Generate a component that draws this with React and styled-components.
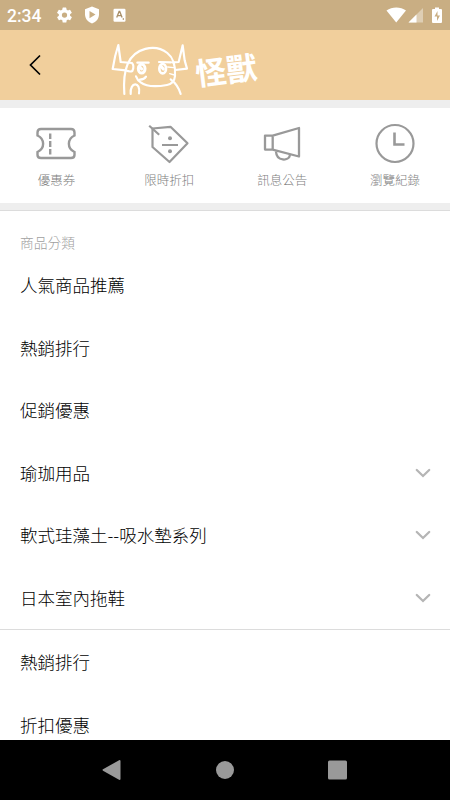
import React from 'react';
import styled, { createGlobalStyle } from 'styled-components';

const GlobalStyle = createGlobalStyle`
  * {
    box-sizing: border-box;
  }

  body {
    margin: 0;
    background: #ffffff;
    font-family: 'Noto Sans CJK TC', sans-serif;
  }
`;

const Screen = styled.div`
  width: 450px;
  height: 800px;
  display: flex;
  flex-direction: column;
  overflow: hidden;
  background: #ffffff;
`;

const StatusBar = styled.div`
  flex: none;
  height: 30px;
  padding: 0 8px 0 7px;
  display: flex;
  align-items: center;
  justify-content: space-between;
  background: #c9ae83;
  color: #ffffff;
`;

const StatusGroup = styled.div`
  display: flex;
  align-items: center;
`;

const Clock = styled.span`
  width: 48px;
  font-family: Roboto, sans-serif;
  font-size: 17.5px;
  font-weight: 500;
  line-height: 30px;
  padding-top: 1px;
`;

const StatusIcon = styled.svg`
  display: block;
  margin-left: ${(props) => props.$gap || 0}px;
`;

const Header = styled.header`
  flex: none;
  height: 70px;
  display: flex;
  align-items: flex-start;
  background: #f1cf9c;
`;

const BackButton = styled.button`
  width: 70px;
  height: 70px;
  padding: 0;
  border: none;
  background: transparent;
  display: flex;
  align-items: center;
  justify-content: center;
`;

const Logo = styled.div`
  display: flex;
  align-items: flex-start;
  padding: 13px 0 0 40px;
  color: #ffffff;
`;

const LogoText = styled.span`
  margin: 8px 0 0 5px;
  font-size: 31px;
  font-weight: 700;
  line-height: 36px;
  white-space: nowrap;
  transform: rotate(-7deg);
`;

const Shortcuts = styled.nav`
  flex: none;
  height: 95px;
  display: grid;
  grid-template-columns: repeat(4, 112.9px);
`;

const Shortcut = styled.a`
  display: flex;
  flex-direction: column;
  align-items: center;
  padding-top: 14.5px;
  color: #999999;
`;

const ShortcutLabel = styled.span`
  margin-top: 5px;
  font-size: 12.5px;
  font-weight: 300;
  line-height: 19px;
  color: #808080;
`;

const Divider = styled.div`
  flex: none;
  height: 8px;
  background: #eeeeee;
  border-bottom: ${(props) => (props.$lined ? '1px solid #dcdcdc' : 'none')};
`;

const Menu = styled.main`
  flex: 1;
  min-height: 0;
  overflow: hidden;
`;

const MenuTitle = styled.h2`
  margin: 0;
  height: 43px;
  padding: 21px 20px 0;
  font-size: 13.75px;
  font-weight: 300;
  line-height: 21px;
  color: #a0a0a0;
`;

const MenuRow = styled.div`
  height: 62.5px;
  padding: 0 19px 0 20px;
  display: flex;
  align-items: center;
  justify-content: space-between;
  font-size: 17.5px;
  font-weight: 300;
  line-height: 26px;
  color: #000000;
`;

const MenuGroup = styled.section`
  border-top: ${(props) => (props.$divided ? '1px solid #dcdcdc' : 'none')};
  padding-top: ${(props) => (props.$divided ? '1px' : '0')};
`;

const NavBar = styled.footer`
  flex: none;
  height: 60px;
  padding: 0 56px;
  display: grid;
  grid-template-columns: repeat(3, 1fr);
  place-items: center;
  background: #000000;
`;

const categories = [
  { name: '人氣商品推薦' },
  { name: '熱銷排行' },
  { name: '促銷優惠' },
  { name: '瑜珈用品', expandable: true },
  { name: '軟式珪藻土--吸水墊系列', expandable: true },
  { name: '日本室內拖鞋', expandable: true }
];

const promotions = [{ name: '熱銷排行' }, { name: '折扣優惠' }];

const CouponIcon = () => (
  <svg width="42" height="42" viewBox="0 0 42 42" fill="none" stroke="currentColor" strokeWidth="2.4">
    <path d="M6 6h30q3.500 0 3.500 3.500v3c-7.500 3.500-7.500 13 0 16.500v3q0 3-3.500 3H6q-3.500 0-3.500-3v-3c7.500-3.500 7.500-13 0-16.500v-3Q2.500 6 6 6z" />
    <path d="M15.200 10.500v5.500M15.200 18v6M15.200 26v5.500" />
  </svg>
);

const DiscountIcon = () => (
  <svg width="42" height="42" viewBox="0 0 42 42" fill="none" stroke="currentColor" strokeWidth="2.2" strokeLinejoin="round">
    <path d="M4.500 5.500 22.500 3.800 39.500 20.300 21.500 39 4.500 24z" />
    <path d="M1.200 2.700l10 9M14 22h16" />
    <circle cx="22" cy="15.200" r="2" fill="currentColor" stroke="none" />
    <circle cx="22" cy="28.300" r="2" fill="currentColor" stroke="none" />
  </svg>
);

const NewsIcon = () => (
  <svg width="42" height="42" viewBox="0 0 42 42" fill="none" stroke="currentColor" strokeWidth="2.3" strokeLinejoin="round">
    <path d="M4 12.600h7.700v14H4zM11.700 12.600 38 5v28.500L11.700 26.600" />
    <path d="M15 28.500c.5 10 13 10 14 3.500" />
  </svg>
);

const HistoryIcon = () => (
  <svg width="42" height="42" viewBox="0 0 42 42" fill="none" stroke="currentColor" strokeWidth="2.2">
    <circle cx="21" cy="20.500" r="18.500" />
    <path d="M20.500 9.500v12h10" strokeWidth="2.600" />
  </svg>
);

const shortcuts = [
  { name: '優惠券', Icon: CouponIcon },
  { name: '限時折扣', Icon: DiscountIcon },
  { name: '訊息公告', Icon: NewsIcon },
  { name: '瀏覽紀錄', Icon: HistoryIcon }
];

const MonsterDrawing = () => (
  <svg width="80" height="53" viewBox="30 25 240 159" fill="none" stroke="currentColor" strokeWidth="6.5" strokeLinecap="round" strokeLinejoin="round">
    <path d="M73 178q-4-58 10-90c20-48 82-62 119-33q26 20 23 69-2 23-24 27-56 10-79-8-9-5-14-18" />
    <path d="M77 107l-39-4q6-40 17-72l7 51 34 3q8 9 1 24-7 4-20-2" />
    <path d="M218 83l18-1 12-50 6 45 7 25-35 4M212 134q22 16 30 44" />
    <path d="M92 178c-3-38 31-38 25-2" />
    <path d="M112 84h34M177 82l36 1M120 135q13-1 18-9" />
    <ellipse cx="125" cy="102" rx="10" ry="13" strokeWidth="9" />
    <ellipse cx="188" cy="102" rx="10" ry="14" strokeWidth="8" />
    <path d="M119 96l6 7M184 96l6 7" strokeWidth="9" />
    <path d="M203 97l18 2M209 117l14 4" strokeWidth="4" />
  </svg>
);

const BackIcon = () => (
  <svg width="14" height="22" viewBox="0 0 14 22" fill="none" stroke="#000000" strokeWidth="1.700">
    <path d="M12 1.500 2.500 11l9.500 9.500" />
  </svg>
);

const ChevronIcon = () => (
  <svg width="16" height="10" viewBox="0 0 16 10" fill="none" stroke="#b5b5b5" strokeWidth="2.300" strokeLinecap="round">
    <path d="M1.800 2 8 8l6.200-6" />
  </svg>
);

const MenuItem = ({ item }) => (
  <MenuRow>
    <span>{item.name}</span>
    {item.expandable && <ChevronIcon />}
  </MenuRow>
);

function App() {
  return (
    <Screen>
      <GlobalStyle />
      <StatusBar>
        <StatusGroup>
          <Clock>2:34</Clock>
          <StatusIcon width="19" height="18" viewBox="0 0 24 24" fill="currentColor">
            <path d="M19.4 13a7.5 7.5 0 0 0 0-2l2.1-1.6a.5.5 0 0 0 .1-.7l-2-3.4a.5.5 0 0 0-.6-.2l-2.5 1a7.3 7.3 0 0 0-1.7-1l-.4-2.6a.5.5 0 0 0-.5-.5h-4a.5.5 0 0 0-.5.5L9 5.1a7.3 7.3 0 0 0-1.7 1l-2.5-1a.5.5 0 0 0-.6.2l-2 3.4a.5.5 0 0 0 .1.7L4.5 11a7.5 7.5 0 0 0 0 2l-2.1 1.6a.5.5 0 0 0-.1.7l2 3.4c.1.2.4.3.6.2l2.5-1a7.3 7.3 0 0 0 1.7 1l.4 2.6c0 .3.2.5.5.5h4c.3 0 .5-.2.5-.5l.4-2.6a7.3 7.3 0 0 0 1.7-1l2.5 1c.2.1.5 0 .6-.2l2-3.4a.5.5 0 0 0-.1-.7zM12 15.5a3.5 3.5 0 1 1 0-7 3.5 3.5 0 0 1 0 7z" />
          </StatusIcon>
          <StatusIcon $gap={10} width="16" height="18" viewBox="0 0 16 18">
            <path d="M8 .5 15 3.300v5c0 4.400-2.800 7.600-7 9.200-4.200-1.600-7-4.800-7-9.200v-5z" fill="currentColor" />
            <path d="M5.500 5v7.200l6-3.600z" fill="#c9ae83" />
          </StatusIcon>
          <StatusIcon $gap={13} width="13" height="14" viewBox="0 0 13 14">
            <rect x="0.500" y="0.800" width="12" height="13" rx="1.200" fill="currentColor" />
            <path d="M3.700 9.500 6.100 3.500h.6l2.400 6M4.500 7.700h3.800M9.700 11h1.300" fill="none" stroke="#a98f68" strokeWidth="1.300" />
          </StatusIcon>
        </StatusGroup>
        <StatusGroup>
          <StatusIcon width="20" height="16" viewBox="0 0 20 16" fill="currentColor">
            <path d="M.5 3.500C6-.6 14.500-.6 20 3.500L10.200 15.500z" />
          </StatusIcon>
          <StatusIcon $gap={2} width="16" height="15" viewBox="0 0 16 15" fill="currentColor">
            <path d="M15 0v14.500H.5z" opacity="0.4" />
            <path d="M8.500 6.500v8H.5z" />
          </StatusIcon>
          <StatusIcon $gap={8} width="10" height="17" viewBox="0 0 10 17">
            <path d="M3 .5h4V2h2q1 0 1 1v12q0 1-1 1H1q-1 0-1-1V3q0-1 1-1h2z" fill="currentColor" />
            <path d="M5.500 4 2.500 9.500H5V14l3-5.500H5.500z" fill="#c9ae83" />
          </StatusIcon>
        </StatusGroup>
      </StatusBar>

      <Header>
        <BackButton aria-label="返回">
          <BackIcon />
        </BackButton>
        <Logo>
          <MonsterDrawing />
          <LogoText>怪獸</LogoText>
        </Logo>
      </Header>

      <Divider />
      <Shortcuts>
        {shortcuts.map(({ name, Icon }) => (
          <Shortcut key={name}>
            <Icon />
            <ShortcutLabel>{name}</ShortcutLabel>
          </Shortcut>
        ))}
      </Shortcuts>
      <Divider $lined />

      <Menu>
        <MenuTitle>商品分類</MenuTitle>
        <MenuGroup>
          {categories.map((item) => (
            <MenuItem key={item.name} item={item} />
          ))}
        </MenuGroup>
        <MenuGroup $divided>
          {promotions.map((item) => (
            <MenuItem key={item.name} item={item} />
          ))}
        </MenuGroup>
      </Menu>

      <NavBar>
        <svg width="20" height="22" viewBox="0 0 20 22" fill="#999999">
          <path d="M17.500 1q1 0 1 1v18q0 1-1 1L1 11.700q-1-.7 0-1.400z" />
        </svg>
        <svg width="20" height="20" viewBox="0 0 20 20" fill="#999999">
          <circle cx="10" cy="10" r="9" />
        </svg>
        <svg width="20" height="20" viewBox="0 0 20 20" fill="#999999">
          <rect x="0" y="0.500" width="19" height="19" rx="1.500" />
        </svg>
      </NavBar>
    </Screen>
  );
}

export default App;
